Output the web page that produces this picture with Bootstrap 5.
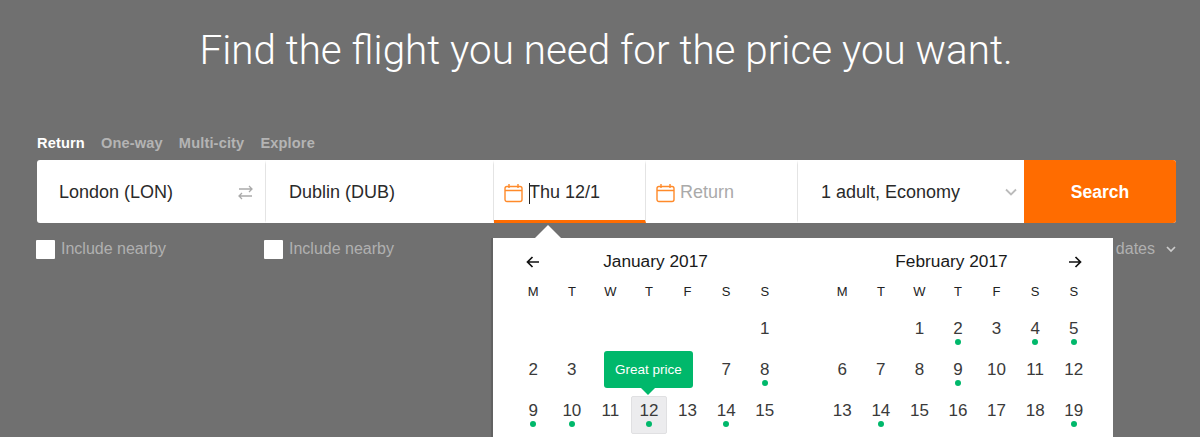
<!DOCTYPE html>
<html lang="en">
<head>
  <meta charset="UTF-8" />
  <meta name="viewport" content="width=device-width, initial-scale=1.0"/>
  <title>Flight search</title>
  <link href="https://cdn.jsdelivr.net/npm/bootstrap@5.3.0/dist/css/bootstrap.min.css" rel="stylesheet" />
  <style>
    html, body { height: 437px; overflow: hidden; }
    body {
      background-color: #707070;
      font-family: "Liberation Sans", Arial, sans-serif;
      color: #2a2a2a;
    }
    .page-wrap { padding: 0 24px 0 37px; }
    .hero-title {
      font-family: Roboto, "Liberation Sans", sans-serif;
      font-weight: 300;
      font-size: 40.4px;
      line-height: 48px;
      color: #fff;
      margin: 27px 0 60px -1px;
    }
    .trip-tabs { height: 17px; margin-bottom: 8px; gap: 16px; font-size: 14.6px; letter-spacing: .15px; line-height: 17px; font-weight: 700; color: #b4b4b4; }
    .trip-tabs .is-on { color: #fff; }
    .search-bar { height: 63px; background: #fff; border-radius: 3px; font-size: 18px; }
    .seg { height: 100%; display: flex; align-items: center; position: relative; border-right: 1px solid #e4e4e4; border-top: 5px solid transparent; border-bottom: 3px solid transparent; }
    .seg-from { width: 229px; padding-left: 22px; }
    .seg-to { width: 228px; padding-left: 23px; }
    .seg-date { width: 152px; padding-left: 10px; gap: 6px; }
    .seg-active { border-bottom-color: #ff6c00; }
    .seg-return { width: 152px; padding-left: 10px; gap: 5px; color: #aaa; }
    .seg-pax { width: 226px; padding-left: 23px; border-right: 0; }
    .swap-ico { position: absolute; right: 12px; top: 20px; }
    .pax-chevron { position: absolute; right: 7px; top: 23px; }
    .caret-bar { display: inline-block; width: 1px; height: 21px; background: #222; margin-right: -1px; }
    .search-btn { width: 152px; height: 100%; border: 0; padding-top: 2px; background: #ff6c00; color: #fff; font-size: 17.5px; font-weight: 700; border-radius: 0 3px 3px 0; }
    .opts-row { margin-top: 16px; font-size: 16px; line-height: 20px; color: #b0b0b0; }
    .near-check { width: 228px; gap: 6px; }
    .near-box { width: 19px; height: 19px; background: #fff; border-radius: 1px; margin-left: -1px; }
    .flex-dates { margin-left: auto; gap: 11px; }
    .cal-panel {
      position: absolute; left: 456px; top: 78px; width: 620px; height: 199px;
      background: #fff; padding: 0 20px; box-shadow: -2px 0 0 rgba(0,0,0,.12);
    }
    .cal-panel::before {
      content: ""; position: absolute; left: 42px; top: -13px;
      border-left: 13px solid transparent; border-right: 13px solid transparent; border-bottom: 13px solid #fff;
    }
    .search-area { position: relative; }
    .cal-month { width: 270px; }
    .month-jan { margin-left: 1px; }
    .cal-head { height: 47px; position: relative; padding-top: 13px; font-size: 17.300px; line-height: 20px; text-align: center; color: #1a1a1a; }
    .month-jan .cal-head { padding-left: 13px; }
    .month-feb .cal-head { padding-right: 13px; }
    .cal-arrow { position: absolute; top: 18px; }
    .cal-grid { display: grid; grid-template-columns: repeat(7, 1fr); }
    .dow { height: 13px; line-height: 13px; font-size: 13px; text-align: center; margin-bottom: 12px; color: #222; }
    .day-cell { height: 41px; position: relative; font-size: 17px; text-align: center; line-height: 20px; padding-top: 9px; color: #3a3a3a; }
    .price-dot { position: absolute; left: 50%; bottom: 6px; width: 6px; height: 6px; margin-left: -3px; border-radius: 50%; background: #00b86b; }
    .day-picked::before { content: ""; position: absolute; left: 1px; right: 1px; top: 4px; height: 38px; background: #ececee; border: 1px solid #e0e0e2; border-radius: 2px; z-index: 0; }
    .day-picked span { position: relative; }
    .day-picked .price-dot { z-index: 1; }
    .price-tip {
      position: absolute; left: 50%; top: -41px; width: 89px; height: 37px; margin-left: -45px;
      background: #00b86b; color: #fff; font-size: 13.500px; line-height: 37px; border-radius: 3px; white-space: nowrap; z-index: 2;
    }
    .price-tip::after {
      content: ""; position: absolute; left: 50%; bottom: -7px; margin-left: -7px;
      border-left: 7px solid transparent; border-right: 7px solid transparent; border-top: 7px solid #00b86b;
    }
  </style>
</head>
<body>
  <div class="page-wrap">
    <h1 class="hero-title text-center">Find the flight you need for the price you want.</h1>

    <div class="trip-tabs d-flex">
      <span class="is-on">Return</span><span>One-way</span><span>Multi-city</span><span>Explore</span>
    </div>

    <div class="search-area">
      <div class="search-bar d-flex">
        <div class="seg seg-from">London (LON)
          <svg class="swap-ico" width="16" height="15" viewBox="0 0 16 15" fill="none" stroke="#aaa" stroke-width="1.3"><path d="M1 4h13M11 1l3 3-3 3" transform="translate(1 0)"/><path d="M15 11H2M5 8l-3 3 3 3"/></svg>
        </div>
        <div class="seg seg-to">Dublin (DUB)</div>
        <div class="seg seg-date seg-active">
          <svg width="19" height="20" viewBox="0 0 19 20" fill="none" stroke="#ff8a2a" stroke-width="1.4"><rect x="1" y="3.500" width="17" height="15" rx="2"/><path d="M1 7.500h17M5 1v4M14 1v4"/></svg>
          <span><span class="caret-bar align-middle"></span>Thu 12/1</span>
        </div>
        <div class="seg seg-return">
          <svg width="19" height="20" viewBox="0 0 19 20" fill="none" stroke="#ff8a2a" stroke-width="1.4"><rect x="1" y="3.500" width="17" height="15" rx="2"/><path d="M1 7.500h17M5 1v4M14 1v4"/></svg>
          <span>Return</span>
        </div>
        <div class="seg seg-pax">1 adult, Economy
          <svg class="pax-chevron" width="12" height="8" viewBox="0 0 12 8" fill="none" stroke="#bbb" stroke-width="1.8"><path d="M1 1.5l5 5 5-5"/></svg>
        </div>
        <button class="search-btn" type="button">Search</button>
      </div>

      <div class="opts-row d-flex">
        <div class="near-check d-flex align-items-center"><span class="near-box"></span>Include nearby</div>
        <div class="near-check d-flex align-items-center"><span class="near-box"></span>Include nearby</div>
        <div class="flex-dates d-flex align-items-center">Flexible dates
          <svg width="10" height="7" viewBox="0 0 10 7" fill="none" stroke="#ccc" stroke-width="1.7"><path d="M1 1l4 4 4-4"/></svg>
        </div>
      </div>

      <div class="cal-panel d-flex">
        <div class="cal-month month-jan">
          <div class="cal-head">
            <svg class="cal-arrow" style="left:12px" width="14" height="12" viewBox="0 0 14 12" fill="none" stroke="#111" stroke-width="1.7"><path d="M13 6H2M6.500 1l-5 5 5 5"/></svg>
            January 2017
          </div>
          <div class="cal-grid" id="calJan"></div>
        </div>
        <div class="cal-month month-feb ms-auto">
          <div class="cal-head">
            February 2017
            <svg class="cal-arrow" style="right:11px" width="14" height="12" viewBox="0 0 14 12" fill="none" stroke="#111" stroke-width="1.7"><path d="M1 6h11M7.500 1l5 5-5 5"/></svg>
          </div>
          <div class="cal-grid" id="calFeb"></div>
        </div>
      </div>
    </div>
  </div>

  <script>
    function buildMonth(id, blanks, days, dots, picked, covered) {
      const grid = document.getElementById(id);
      let html = ["M", "T", "W", "T", "F", "S", "S"].map(d => `<div class="dow">${d}</div>`).join("");
      html += '<div class="day-cell"></div>'.repeat(blanks);
      for (let d = 1; d <= days; d++) {
        const isPicked = d === picked;
        // dates under the tooltip stay empty
        const label = covered.includes(d) ? "" : d;
        html += `<div class="day-cell${isPicked ? " day-picked" : ""}"><span>${label}</span>` +
          (dots.includes(d) ? '<i class="price-dot"></i>' : "") +
          (isPicked ? '<div class="price-tip">Great price</div>' : "") + "</div>";
      }
      grid.innerHTML = html;
    }
    buildMonth("calJan", 6, 15, [8, 9, 10, 12, 14], 12, [4, 5, 6]);
    buildMonth("calFeb", 2, 19, [2, 4, 5, 9, 14, 19], 0, []);
  </script>
  <script src="https://cdn.jsdelivr.net/npm/bootstrap@5.3.0/dist/js/bootstrap.bundle.min.js"></script>
</body>
</html>
